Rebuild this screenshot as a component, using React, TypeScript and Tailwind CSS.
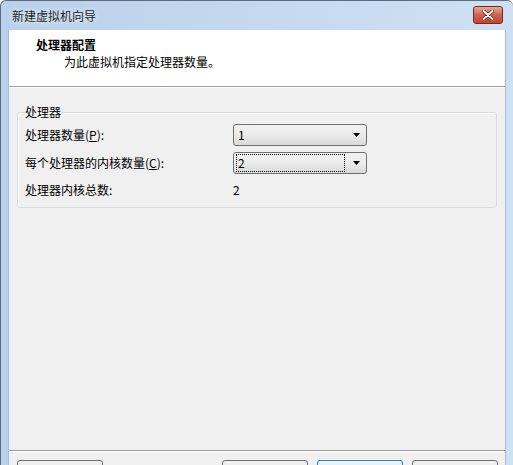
import React from 'react';

const font = { fontFamily: '"Microsoft YaHei", "Noto Sans CJK SC", "Liberation Sans", sans-serif' };

const Arrow = () => (
  <svg width="7" height="4" viewBox="0 0 7 4" className="shrink-0">
    <path d="M0 0h7L3.5 4z" fill="#000" />
  </svg>
);

const Combo: React.FC<{ value: string; focused?: boolean }> = ({ value, focused }) => (
  <div className="flex h-[22px] w-[134px] items-center rounded-[3px] border border-[#707070] bg-gradient-to-b from-[#f2f2f2] via-[#ebebeb] to-[#d9d9d9] pl-[2px] pr-[6px]">
    <div
      className={`flex h-[18px] flex-1 items-center pl-[1px] ${
        focused ? 'mr-[8px] border border-dotted border-black' : 'border border-transparent'
      }`}
    >
      {value}
    </div>
    <Arrow />
  </div>
);

// only the top edge of the buttons is inside the window, so labels go in aria-label
const Button: React.FC<{ label: string; primary?: boolean }> = ({ label, primary }) => (
  <div
    aria-label={label}
    className={`h-[23px] w-[86px] rounded-[3px] border ${
      primary
        ? 'border-[#3c7fb1] bg-gradient-to-b from-[#eaf6fd] to-[#bee6fd]'
        : 'border-[#707070] bg-gradient-to-b from-[#f2f2f2] to-[#dddddd]'
    }`}
  />
);

export default function App() {
  return (
    <div
      className="flex h-[465px] w-[513px] flex-col overflow-hidden rounded-t-[6px] border-t border-l border-[#5c6b7e] bg-gradient-to-r from-[#b9d1ea] via-[#c4d9ef] to-[#cfe0f3] text-[12px] text-black"
      style={font}
    >
      {/* Title bar */}
      <div className="flex h-[29px] shrink-0 items-center justify-between pl-[11px] pr-[10px]">
        <span className="leading-[16px] text-[#1e1e1e] [text-shadow:0_0_6px_#ffffff]">新建虚拟机向导</span>
        <div className="-mt-[2px] flex h-[18px] w-[30px] items-center justify-center rounded-[3px] border border-[#6d2c26] bg-gradient-to-b from-[#e7a898] via-[#d0624f] to-[#c2402e]">
          <svg width="12" height="10" viewBox="0 0 12 10">
            <path d="M1.5 1l9 8M10.5 1l-9 8" stroke="#5b1a12" strokeWidth="3.4" strokeLinecap="round" />
            <path d="M1.5 1l9 8M10.5 1l-9 8" stroke="#ffffff" strokeWidth="2" strokeLinecap="round" />
          </svg>
        </div>
      </div>

      {/* Client area */}
      <div className="mx-[7px] flex shrink-0 flex-col border-l border-r border-[#a8bdd6] bg-[#f0f0f0]">
        {/* Header */}
        <div className="h-[57px] shrink-0 border-b border-[#a0a0a0] bg-white pl-[27px] pt-[7px]">
          <div className="font-bold leading-[16px]">处理器配置</div>
          <div className="mt-[1px] pl-[28px] leading-[16px]">为此虚拟机指定处理器数量。</div>
        </div>
        <div className="h-px bg-white" />

        {/* Body */}
        <div className="flex h-[362px] shrink-0 flex-col px-[8px] pt-[16px]">
          <fieldset className="w-[480px] rounded-[3px] border border-[#d9dde2] shadow-[inset_1px_1px_0_#ffffff]">
            <legend className="ml-[7px] leading-[16px]">处理器</legend>
            <div className="grid grid-cols-[208px_134px] gap-y-[6px] pb-[7px] pl-[7px] pt-[4px]">
              <div className="flex h-[22px] items-center">
                处理器数量(<span className="underline">P</span>):
              </div>
              <Combo value="1" />
              <div className="flex h-[22px] items-center">
                每个处理器的内核数量(<span className="underline">C</span>):
              </div>
              <Combo value="2" focused />
              <div className="flex h-[20px] items-center">处理器内核总数:</div>
              <div className="flex h-[20px] items-center">2</div>
            </div>
          </fieldset>
        </div>

        {/* Footer */}
        <div className="h-px shrink-0 bg-[#a0a0a0]" />
        <div className="h-px shrink-0 bg-white" />
        <div className="flex shrink-0 pl-[8px] pt-[8px]">
          <Button label="帮助" />
          <div className="ml-[119px] flex gap-[9px]">
            <Button label="< 上一步(B)" />
            <Button label="下一步(N) >" primary />
            <Button label="取消" />
          </div>
        </div>
      </div>
    </div>
  );
}
